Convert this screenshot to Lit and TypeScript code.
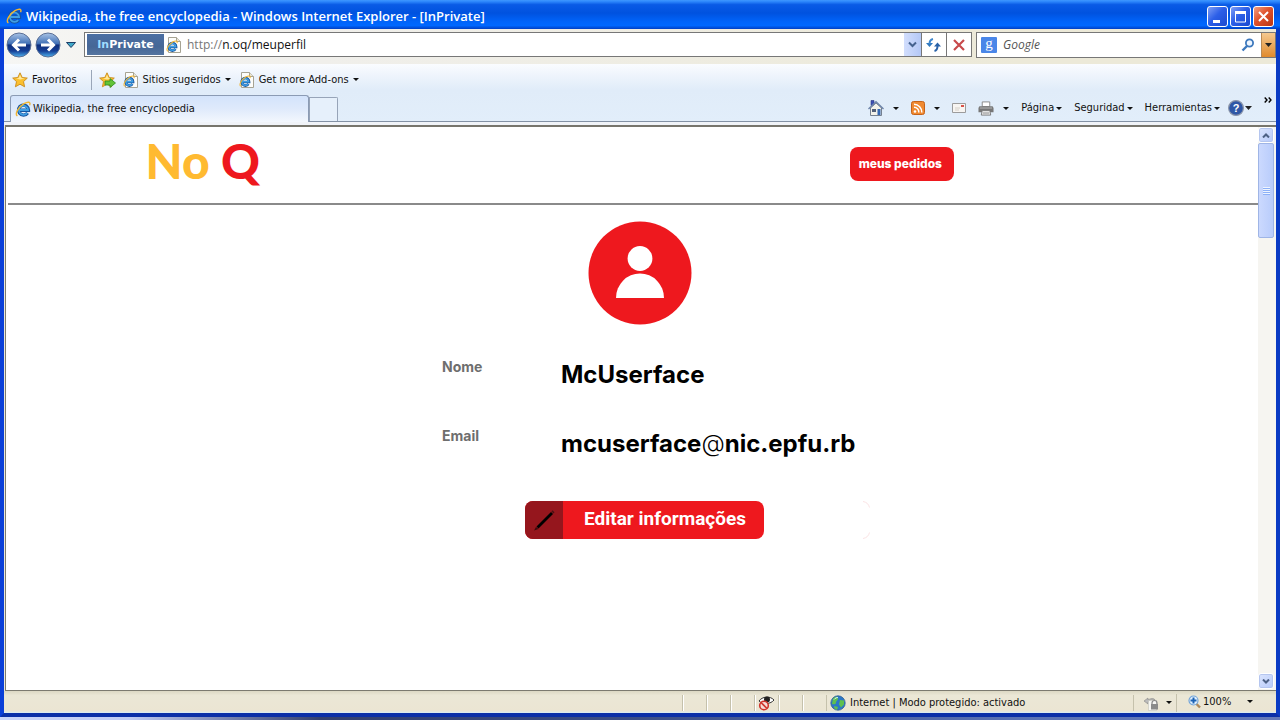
import { LitElement, html, css, svg } from "lit";
import { customElement } from "lit/decorators.js";

const ieMark = svg`
  <path d="M4.200 9.200h9.300A5 5 0 1 0 12.600 12" fill="none" stroke="#17549f" stroke-width="3.400"/>
  <path d="M4.200 9h8.900A4.600 4.600 0 1 0 12.200 12" fill="none" stroke="#3f9fe4" stroke-width="1.800"/>
  <path d="M2.400 15C-.6 13 3.400 6 9 2.700c4-2.300 7-2 5.600 1.500" fill="none" stroke="#f2b632" stroke-width="1.400"/>`;

const ieIcon = (size: number) => html`<svg width=${size} height=${size} viewBox="0 0 16 16" aria-hidden="true">${ieMark}</svg>`;

const pageIcon = html`<svg width="16" height="16" viewBox="0 0 16 16" aria-hidden="true">
  <path d="M2.500.5h8l4 4v11h-12z" fill="#fdfdfa" stroke="#a6a393"/>
  <path d="M10.500.5v4h4" fill="#e8e5d8" stroke="#a6a393"/>
  <g transform="translate(0 3) scale(.75)">${ieMark}</g>
</svg>`;

const caret = html`<svg class="caret" width="6" height="3" viewBox="0 0 6 3" aria-hidden="true"><path d="M0 0h6L3 3z" fill="currentColor"/></svg>`;

const arrowDisc = (label: string, flip: boolean) => html`<button class="disc" aria-label=${label}>
  <svg width="26" height="26" viewBox="0 0 26 26" aria-hidden="true">
    <defs>
      <linearGradient id="disc" x1="0" y1="0" x2="0" y2="1">
        <stop offset="0" stop-color="#a9c4e6"/><stop offset=".45" stop-color="#3f6fb5"/>
        <stop offset=".5" stop-color="#0f2f7c"/><stop offset=".75" stop-color="#153f96"/><stop offset="1" stop-color="#4fb4f0"/>
      </linearGradient>
    </defs>
    <circle cx="13" cy="13" r="12" fill="url(#disc)" stroke="#5b6f95"/>
    <g transform=${flip ? "matrix(-1 0 0 1 26 0)" : ""}>
      <path d="M20 13H8M13 7.500 7.500 13l5.500 5.500" fill="none" stroke="#fff" stroke-width="3"/>
    </g>
  </svg>
</button>`;

const star = svg`<path d="M8 .8l2.200 4.700 5.100.6-3.800 3.500 1.100 5.200L8 12.200l-4.600 2.600 1.100-5.200L.7 6.100l5.100-.6z" fill="#fbc02f" stroke="#c98a1b" stroke-width=".9"/>
  <path d="M8 2.800l1.500 3.300 3.300.5-4.800 1-4-1 2.600-.5z" fill="#ffe89a"/>`;

@customElement("app-root")
export class AppRoot extends LitElement {
  static styles = css`
    :host {
      display: flex;
      flex-direction: column;
      height: 100vh;
      box-sizing: border-box;
      padding-bottom: 3px;
      background: linear-gradient(90deg, #c9d4fa 0, #c0ccf5 10%, #33406e 25%, #3c4f86 50%, #5a72b4 80%, #6479b8);
      font: 11px/16px "DejaVu Sans Condensed", "Noto Sans", sans-serif;
      color: #111;
    }
    *, *::before { box-sizing: border-box; }
    button, input { font: inherit; color: inherit; border: 0; background: none; padding: 0; margin: 0; }
    button { display: flex; align-items: center; white-space: nowrap; }
    input { min-width: 0; outline: 0; }
    svg { display: block; flex: none; }

    .window {
      flex: 1;
      min-height: 0;
      display: flex;
      flex-direction: column;
      border: solid #0a3fd0;
      border-width: 0 4px 4px;
      border-color: #0a3fd0 #0a3bc4 #0a2fa8 #0a3fd8;
      background: #ece9d8;
    }
    .titlebar {
      display: flex;
      align-items: center;
      height: 29px;
      flex: none;
      margin: 0 -4px;
      padding: 3px 6px 0 6px;
      gap: 4px;
      background: linear-gradient(#3f98ff 0, #2b85fb 6%, #0a5be6 16%, #0052df 45%, #0064fa 75%, #0068ff 88%, #003fc4 100%);
    }
    .title {
      flex: 1;
      margin: 0;
      font: 600 13px/18px "Open Sans", "Noto Sans", sans-serif;
      color: #fff;
    }
    .controls { display: flex; gap: 2px; }
    .control {
      width: 21px;
      height: 21px;
      justify-content: center;
      border: 1px solid #fff;
      border-radius: 3px;
      background: linear-gradient(135deg, #7f9ff5, #2c5fe8 45%, #1b49cf);
    }
    .control.close { background: linear-gradient(135deg, #f0a083, #e0522c 45%, #b93511); }

    .navbar {
      display: flex;
      align-items: center;
      flex: none;
      height: 35px;
      padding: 0 0 4px 2px;
      background: linear-gradient(90deg, #f6f6f4, #f0efeb 25%, #ece9d8 80%);
    }
    .disc { margin-right: 3px; }
    .history { width: 14px; justify-content: center; }
    .address {
      flex: 1;
      display: flex;
      align-items: stretch;
      height: 25px;
      margin-left: 6px;
      border: 1px solid #777;
      background: #fff;
    }
    .nav-gap { width: 4px; }
    .inprivate {
      display: flex;
      align-items: center;
      justify-content: center;
      width: 77px;
      margin: 1px 2px 1px 2px;
      background: linear-gradient(#4b6fa3, #466797 60%, #54749f);
      color: #fff;
      font: bold 11px/16px "DejaVu Sans", sans-serif;
    }
    .inprivate span { color: #9fdcff; }
    .url { flex: 1; display: flex; align-items: center; gap: 5px; font: 12px/16px "Open Sans", "Noto Sans", sans-serif; color: #777; }
    .url label { display: flex; }
    .url input { width: 400px; color: #111; }
    .drop { width: 17px; justify-content: center; background: linear-gradient(90deg, #d2defd, #b4c8f6); }
    .tool { width: 25px; justify-content: center; border-left: 1px solid #777; }
    .search {
      display: flex;
      align-items: center;
      width: 24%;
      max-width: 300px;
      height: 26px;
      border: 1px solid #777;
      background: #fff;
      padding-left: 4px;
      gap: 6px;
    }
    .search input { flex: 1; font: italic 12px/20px "Open Sans", "Noto Sans", sans-serif; }
    .search input::placeholder { color: #555; opacity: 1; }
    .search-drop { width: 14px; align-self: stretch; justify-content: center; background: linear-gradient(#f5c990, #e08a2c); border-left: 1px solid #b98a55; }

    .bars {
      flex: none;
      display: flex;
      flex-direction: column;
      height: 61px;
      border-bottom: 3px solid #f0f3f8;
      background: linear-gradient(#fafcff, #eef4fc 20%, #e0ecf9 45%, #e2eefa);
    }
    .favorites { display: flex; align-items: center; height: 31px; padding-left: 8px; }
    .favorites button { gap: 4px; }
    .favorites .fav { padding-right: 14px; border-right: 1px solid #9aa6b8; height: 20px; margin-right: 7px; }
    .favorites .add { margin-right: 7px; }
    .favorites .link { margin-right: 8px; }
    .tabs { flex: 1; display: flex; align-items: stretch; border-bottom: 1px solid #8391a5; padding-left: 6px; }
    .tab {
      width: 299px;
      margin-bottom: -1px;
      padding-left: 4px;
      gap: 2px;
      border: 1px solid #8b9bb4;
      border-bottom: 0;
      border-radius: 3px 3px 0 0;
      background: linear-gradient(#d3e3fb, #dfeafb 50%, #f3f7fd);
    }
    .newtab { width: 29px; margin-top: 2px; border: 1px solid #97a4b8; border-bottom: 0; border-radius: 0 2px 0 0; background: #e6f0fb; }
    .commands { margin-left: auto; display: flex; align-items: center; padding-right: 4px; }
    .commands button { height: 20px; }
    .icon-command { gap: 9px; margin-right: 12px; }
    .text-command { gap: 2px; margin-right: 12px; }
    .help { gap: 1px; margin: 0 12px 0 -4px; }
    .more { align-self: flex-start; margin-top: -5px; }

    .viewport {
      flex: 1;
      min-height: 0;
      display: flex;
      margin-left: 1px;
      border: solid #7c7a70;
      border-width: 2px 0 1px 1px;
      border-top-color: #77756c;
      background: #fff;
    }
    .page { flex: 1; min-width: 0; padding-left: 2px; color: #000; font-family: Inter, sans-serif; }
    .site-header {
      display: flex;
      align-items: flex-start;
      justify-content: space-between;
      height: 78px;
      padding: 4px 24% 0 11%;
      border-bottom: 2px solid #8a8a8a;
    }
    .logo { font: 900 48px/60px Lato, sans-serif; color: #ffba31; text-decoration: none; white-space: pre; }
    .logo span { color: #ee181e; }
    .orders {
      height: 34px;
      margin: 16px 4px 0 0;
      padding: 0 12px 0 9px;
      border-radius: 8px;
      background: #ee181e;
      color: #fff;
      font: 800 12px/16px Inter, sans-serif;
    }
    .profile { width: 396px; margin: 16px auto 0; }
    .page main { padding-left: 14px; }
    .avatar { margin: 0 auto; }
    dl { display: grid; grid-template-columns: 119px 1fr; row-gap: 35px; margin: 32px 0 0; white-space: nowrap; }
    dt { padding-top: 1px; font: 700 14px/18px Inter, sans-serif; color: #6e6e6e; }
    dd { margin: 0; padding-top: 2px; font: 700 24px/32px Inter, sans-serif; }
    dd .at { font-weight: 300; }
    .actions { display: flex; justify-content: space-between; width: 345px; margin: 41px 0 0 83px; }
    .edit { height: 38px; border-radius: 8px; overflow: hidden; background: #ee181e; color: #fff; font: 700 19px/24px Roboto, sans-serif; }
    .edit-icon { display: flex; align-items: center; justify-content: center; width: 38px; height: 38px; background: #95161d; }
    .edit-text { padding: 0 18px 2px 21px; }

    .scrollbar { width: 18px; display: flex; flex-direction: column; justify-content: space-between; background: #f6f5f1; padding: 0 2px 1px 0; }
    .scroll-button { width: 16px; height: 16px; justify-content: center; border: 1px solid #fff; border-radius: 3px; background: linear-gradient(135deg, #dbe5fe, #b7cafa); box-shadow: inset 0 0 0 1px #b5c6ef; }
    .track { flex: 1; }
    .thumb { display: flex; align-items: center; justify-content: center; width: 16px; height: 95px; border: 1px solid #9fb5e6; border-radius: 2px; background: linear-gradient(90deg, #cbd9fe, #b9ccfb); }

    .statusbar { flex: none; display: flex; align-items: center; height: 22px; padding-top: 1px; background: linear-gradient(#dcd8c4, #ebe7d6 20%, #ebe5d3 90%, #d8ecf5); }
    .slot { width: 24px; height: 16px; display: flex; align-items: center; justify-content: center; border-left: 1px solid #c5c1ac; box-shadow: inset 1px 0 #fff; }
    .blank { flex: 1; }
    .zone { display: flex; align-items: center; gap: 4px; width: 307px; height: 16px; padding-left: 3px; border-left: 1px solid #c5c1ac; }
    .lock { width: 43px; height: 16px; gap: 7px; padding-left: 9px; border-left: 1px solid #c5c1ac; }
    .zoom { width: 100px; height: 18px; gap: 2px; padding: 0 23px 2px 11px; border-left: 1px solid #c5c1ac; }
    .zoom .caret { margin-left: auto; }
  `;

  render() {
    return html`
      <div class="window">
        <header class="titlebar">
          ${ieIcon(16)}
          <h1 class="title">Wikipedia, the free encyclopedia - Windows Internet Explorer - [InPrivate]</h1>
          <div class="controls">
            <button class="control" aria-label="Minimizar"><svg width="15" height="15"><path d="M3 11h7v3H3z" fill="#fff"/></svg></button>
            <button class="control" aria-label="Maximizar"><svg width="15" height="15"><path d="M2.500 3v10h10V3" fill="none" stroke="#fff"/><path d="M2 2h11v3H2z" fill="#fff"/></svg></button>
            <button class="control close" aria-label="Cerrar"><svg width="15" height="15"><path d="M3 3l9 9M12 3l-9 9" stroke="#fff" stroke-width="2"/></svg></button>
          </div>
        </header>

        <nav class="navbar">
          ${arrowDisc("Atrás", false)}${arrowDisc("Adelante", true)}
          <button class="history" aria-label="Historial"><svg width="10" height="6"><path d="M.5.5h9L5 5.500z" fill="#3fa9c9" stroke="#1c3d66"/></svg></button>
          <div class="address">
            <div class="inprivate"><span>In</span>Private</div>
            <div class="url">${pageIcon}<label for="url">http://<input id="url" aria-label="Dirección" value="n.oq/meuperfil"></label></div>
            <button class="drop" aria-label="Direcciones"><svg width="9" height="7"><path d="M1 1.500l3.500 3.500L8 1.500" fill="none" stroke="#45628f" stroke-width="2"/></svg></button>
            <button class="tool" aria-label="Actualizar"><svg width="16" height="14"><path d="M0 5h7L3.500 9z" fill="#2f78bf"/><path d="M7 1C4.500 1.500 3.500 3 3.500 6" fill="none" stroke="#3d86cc" stroke-width="2"/><path d="M8 8.500h7L11.500 4.500z" fill="#2a62a8"/><path d="M8.500 13c2.500-.5 3-2 3-5" fill="none" stroke="#2a62a8" stroke-width="2"/></svg></button>
            <button class="tool" aria-label="Detener"><svg width="12" height="12"><path d="M1 1l10 10M11 1L1 11" stroke="#c8494b" stroke-width="2.200"/></svg></button>
          </div>
          <div class="nav-gap"></div>
          <div class="search">
            <svg width="16" height="16" viewBox="0 0 16 16" overflow="visible" aria-hidden="true"><rect width="16" height="16" rx="1" fill="#4a86e8"/><text x="8" y="11" text-anchor="middle" font-family="Liberation Serif" font-size="15" fill="#fff">g</text></svg>
            <input aria-label="Buscar" placeholder="Google">
            <button aria-label="Buscar"><svg width="14" height="14"><circle cx="8.500" cy="5" r="3.600" fill="#eef6ff" stroke="#3c78bd" stroke-width="1.800"/><path d="M6 8l-4.500 4.500" stroke="#3c78bd" stroke-width="2.400"/></svg></button>
            <button class="search-drop" aria-label="Proveedores"><svg width="7" height="4"><path d="M0 0h7L3.500 4z" fill="#222"/></svg></button>
          </div>
        </nav>

        <div class="bars">
          <div class="favorites">
            <button class="fav"><svg width="16" height="16" viewBox="0 0 16 16">${star}</svg>Favoritos</button>
            <button class="add" aria-label="Agregar a favoritos"><svg width="17" height="16" viewBox="0 0 17 16">${star}<path d="M6 9h5V6.500l5.500 4.500-5.500 4.500V13H6z" fill="#62c437" stroke="#2f8a1c" stroke-width=".8"/></svg></button>
            <button class="link">${pageIcon}Sitios sugeridos ${caret}</button>
            <button class="link">${pageIcon}Get more Add-ons ${caret}</button>
          </div>
          <div class="tabs">
            <button class="tab">${ieIcon(16)}Wikipedia, the free encyclopedia</button>
            <button class="newtab" aria-label="Nueva pestaña"></button>
            <div class="commands">
              <button class="icon-command" aria-label="Página principal"><svg width="16" height="16" viewBox="0 0 16 16"><path d="M3 .5h3v5H3z" fill="#3c4fb4" stroke="#2a3580" stroke-width=".6"/><path d="M2.500 8v7.500h11V8L8 3z" fill="#f3f2ea" stroke="#75808f"/><path d="M.5 9L8 1.800 15.500 9" fill="none" stroke="#6d83a8" stroke-width="1.400"/><path d="M4 9h4v3H4z" fill="#526078"/><path d="M9.500 9h3v6h-3z" fill="#3568b2"/></svg>${caret}</button>
              <button class="icon-command" aria-label="Fuentes"><svg width="14" height="14" viewBox="0 0 14 14"><rect x=".5" y=".5" width="13" height="13" rx="2" fill="#f08a31" stroke="#c5621a"/><circle cx="4" cy="10.500" r="1.300" fill="#fff"/><path d="M3 6.200a4.800 4.800 0 0 1 4.800 5.300M3 3.200a8 8 0 0 1 7.800 8.300" fill="none" stroke="#fff" stroke-width="1.500"/></svg>${caret}</button>
              <button class="icon-command" aria-label="Leer correo"><svg width="14" height="10" viewBox="0 0 14 10"><path d="M.5.5h13v9H.5z" fill="#f7f5f2" stroke="#9c9c9c"/><path d="M9 2h3v2H9z" fill="#d9534a"/><path d="M3 5h5M3 7h4" stroke="#d5d0c8"/></svg></button>
              <button class="icon-command" aria-label="Imprimir"><svg width="16" height="15" viewBox="0 0 17 15"><path d="M4.500.5h8v5h-8z" fill="#fff" stroke="#888"/><path d="M1.500 5h14l1 2v4.500H.5V7z" fill="#777"/><path d="M2 7h13" stroke="#bbb"/><path d="M4.500 9.500h8l1 5h-10z" fill="#f4f4f4" stroke="#777"/><path d="M5 11.500h7M5 13h7" stroke="#aaa"/></svg>${caret}</button>
              <button class="text-command">Página ${caret}</button>
              <button class="text-command">Seguridad ${caret}</button>
              <button class="text-command">Herramientas ${caret}</button>
              <button class="help" aria-label="Ayuda"><svg width="16" height="16" viewBox="0 0 16 16"><circle cx="8" cy="8" r="7.400" fill="#2f57a6" stroke="#8b95aa" stroke-width="1.200"/><text x="8" y="12" text-anchor="middle" font-family="Liberation Sans" font-weight="700" font-size="11" fill="#fff">?</text></svg><svg width="7" height="4"><path d="M0 0h7L3.500 4z" fill="#222"/></svg></button>
              <button class="more" aria-label="Más"><svg width="8" height="6"><path d="M.7.5L3 3 .7 5.500M4.700.5L7 3 4.700 5.500" fill="none" stroke="#000" stroke-width="1.400"/></svg></button>
            </div>
          </div>
        </div>

        <div class="viewport">
          <div class="page">
            <header class="site-header">
              <a class="logo" href="#">No <span>Q</span></a>
              <button class="orders">meus pedidos</button>
            </header>
            <main>
              <section class="profile">
                <svg class="avatar" width="104" height="104" viewBox="0 0 104 104" role="img" aria-label="Perfil">
                  <circle cx="52" cy="52" r="51.500" fill="#ee181e"/>
                  <circle cx="52" cy="37.500" r="12.400" fill="#fff"/>
                  <path d="M28 77a24 24.500 0 0 1 48 0z" fill="#fff"/>
                </svg>
                <dl>
                  <dt>Nome</dt><dd>McUserface</dd>
                  <dt>Email</dt><dd>mcuserface<span class="at">@</span>nic.epfu.rb</dd>
                </dl>
                <div class="actions">
                  <button class="edit">
                    <span class="edit-icon"><svg width="24" height="24" viewBox="0 0 24 24"><path d="M4.500 18.500L19 4l2 2L6.500 20.500z" fill="#000"/><path d="M4 19l2.500 2-4.500 1.500z" fill="#3a0a0c"/><path d="M19.500 3.500l1-1.200 2 2-1 1.200z" fill="#4a1013"/></svg></span>
                    <span class="edit-text">Editar informações</span>
                  </button>
                  <svg width="8" height="38" viewBox="0 0 8 38" aria-hidden="true"><path d="M1 .5a8 8 0 0 1 6.500 6M1 37.500a8 8 0 0 0 6.500-6" fill="none" stroke="#fbe3e4"/></svg>
                </div>
              </section>
            </main>
          </div>
          <div class="scrollbar">
            <button class="scroll-button" aria-label="Subir"><svg width="8" height="5"><path d="M1 4.500L4 1.500l3 3" fill="none" stroke="#4d6185" stroke-width="2"/></svg></button>
            <div class="track"><div class="thumb"><svg width="7" height="8"><path d="M0 .5h7M0 2.500h7M0 4.500h7M0 6.500h7" stroke="#eef4fe"/><path d="M0 1.500h7M0 3.500h7M0 5.500h7M0 7.500h7" stroke="#8cb0f8"/></svg></div></div>
            <button class="scroll-button" aria-label="Bajar"><svg width="8" height="5"><path d="M1 .5l3 3 3-3" fill="none" stroke="#4d6185" stroke-width="2"/></svg></button>
          </div>
        </div>

        <footer class="statusbar">
          <div class="blank"></div>
          <div class="slot"></div><div class="slot"></div><div class="slot"></div>
          <div class="slot"><svg width="17" height="16" viewBox="0 0 17 16"><path d="M1 6C4 1.500 12 .5 16 5c-3 4-11 5-15 1z" fill="#fff" stroke="#333"/><circle cx="9" cy="4.500" r="3" fill="#222"/><circle cx="6" cy="10.500" r="4.300" fill="#f6dcd8" stroke="#d0342c" stroke-width="1.600"/><path d="M3 7.500l6 6" stroke="#d0342c" stroke-width="1.600"/></svg></div>
          <div class="slot"></div><div class="slot"></div>
          <div class="zone"><svg width="16" height="16" viewBox="0 0 16 16"><circle cx="8" cy="8" r="7.200" fill="#2b78c8" stroke="#35618f" stroke-width=".8"/><path d="M3 3.500c3-2.500 5-2 5 0s-2 2-2 4-2 2-4 1.500zM10 5l4 .5v4l-3 3-2-3zM4.500 11l3.500 1-1 3-3-2z" fill="#5fc04e"/><path d="M4 4.500c1-1.500 3-2 4-2" fill="none" stroke="#d8f0ff"/></svg>Internet | Modo protegido: activado</div>
          <button class="lock" aria-label="Seguridad"><svg width="16" height="16" viewBox="0 0 16 16"><path d="M1 6l4-3v2c3-2 6-2 7 0-3-1-5 0-7 2v2z" fill="#bbb" stroke="#888" stroke-width=".6"/><path d="M5.500 5.500h8v10h-8z" fill="#f7f7f4" stroke="#c4c4be" stroke-width=".6"/><path d="M9 9V8a2.500 2.500 0 0 1 5 0v1" fill="none" stroke="#888" stroke-width="1.200"/><path d="M8 9h7v5.500H8z" fill="#8b8b8b"/></svg>${caret}</button>
          <button class="zoom"><svg width="13" height="14" viewBox="0 0 13 14"><path d="M8 8.500l4 4" stroke="#b08a5a" stroke-width="2.400"/><circle cx="5.500" cy="5.500" r="4.500" fill="#e2f1ff" stroke="#74a5d8" stroke-width="1.200"/><path d="M5.500 2.500v6M2.500 5.500h6" stroke="#1b62b4" stroke-width="2"/></svg>100% ${caret}</button>
        </footer>
      </div>
    `;
  }
}
